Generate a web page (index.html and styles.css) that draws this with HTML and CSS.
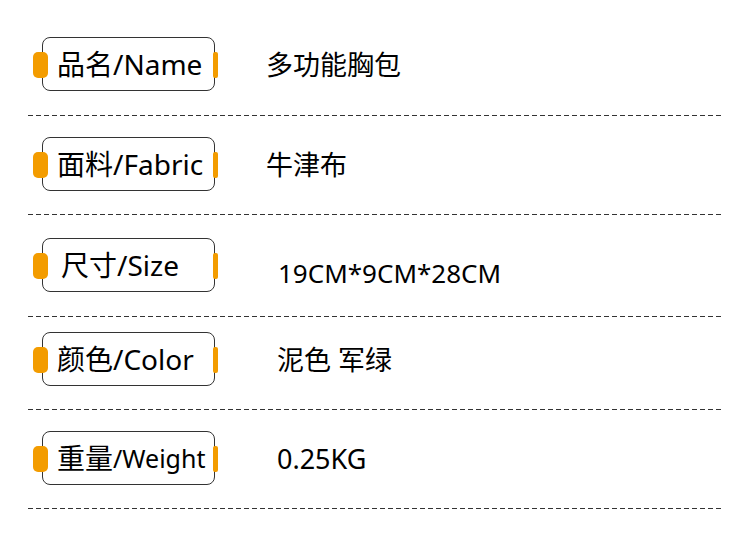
FILE: index.html
```html
<!DOCTYPE html>
<html lang="zh-CN">
<head>
<meta charset="utf-8">
<title>产品参数</title>
<link rel="stylesheet" href="styles.css">
</head>
<body>
<div class="spec">
  <div class="row">
    <div class="label"><span class="pill pill-l"></span>品名/Name<span class="pill pill-r"></span></div>
    <div class="value">多功能胸包</div>
  </div>
  <div class="row">
    <div class="label"><span class="pill pill-l"></span>面料/Fabric<span class="pill pill-r"></span></div>
    <div class="value">牛津布</div>
  </div>
  <div class="row">
    <div class="label"><span class="pill pill-l"></span>尺寸/Size<span class="pill pill-r"></span></div>
    <div class="value">19CM*9CM*28CM</div>
  </div>
  <div class="row">
    <div class="label"><span class="pill pill-l"></span>颜色/Color<span class="pill pill-r"></span></div>
    <div class="value">泥色 军绿</div>
  </div>
  <div class="row">
    <div class="label"><span class="pill pill-l"></span>重量<span class="small">/Weight</span><span class="pill pill-r"></span></div>
    <div class="value">0.25KG</div>
  </div>
</div>
</body>
</html>
```

FILE: styles.css
```css
* { box-sizing: border-box; }

html, body {
  margin: 0;
  padding: 0;
  background: #ffffff;
}

body {
  font-family: "Noto Sans", "Noto Sans CJK SC", sans-serif;
  color: #000000;
  width: 750px;
  height: 535px;
  overflow: hidden;
}

.spec {
  width: 695px;
  margin-left: 28px;
}

.row {
  display: flex;
  align-items: center;
  padding-top: 21px;
  padding-bottom: 24px;
  background: repeating-linear-gradient(90deg, #333 0 5px, transparent 5px 8px) left bottom / 100% 1px no-repeat;
}

.row:nth-child(1) { padding-top: 37px; padding-bottom: 25px; }
.row:nth-child(3) { padding-top: 23px; padding-bottom: 25px; }
.row:nth-child(4) { padding-top: 15px; }

.label {
  position: relative;
  display: flex;
  align-items: center;
  margin-left: 14px;
  width: 173px;
  height: 54px;
  padding-left: 14px;
  border: 1.5px solid #333;
  border-radius: 8px;
  font-size: 28px;
  line-height: 1;
  white-space: nowrap;
}

.row:nth-child(3) .label { padding-left: 18px; }

.small { font-size: 25px; }

.pill {
  position: absolute;
  top: 50%;
  height: 26px;
  margin-top: -12px;
  background: #f39c00;
}

.pill-l {
  left: -10px;
  width: 15px;
  border-radius: 5px;
}

.pill-r {
  right: -4px;
  width: 5px;
  border-radius: 2px;
}

.value {
  margin-left: 51px;
  font-size: 27px;
  line-height: 1;
  white-space: nowrap;
}

.row:nth-child(3) .value { margin-left: 63px; margin-top: 16px; font-size: 26px; }
.row:nth-child(4) .value,
.row:nth-child(5) .value { margin-left: 62px; }
```
